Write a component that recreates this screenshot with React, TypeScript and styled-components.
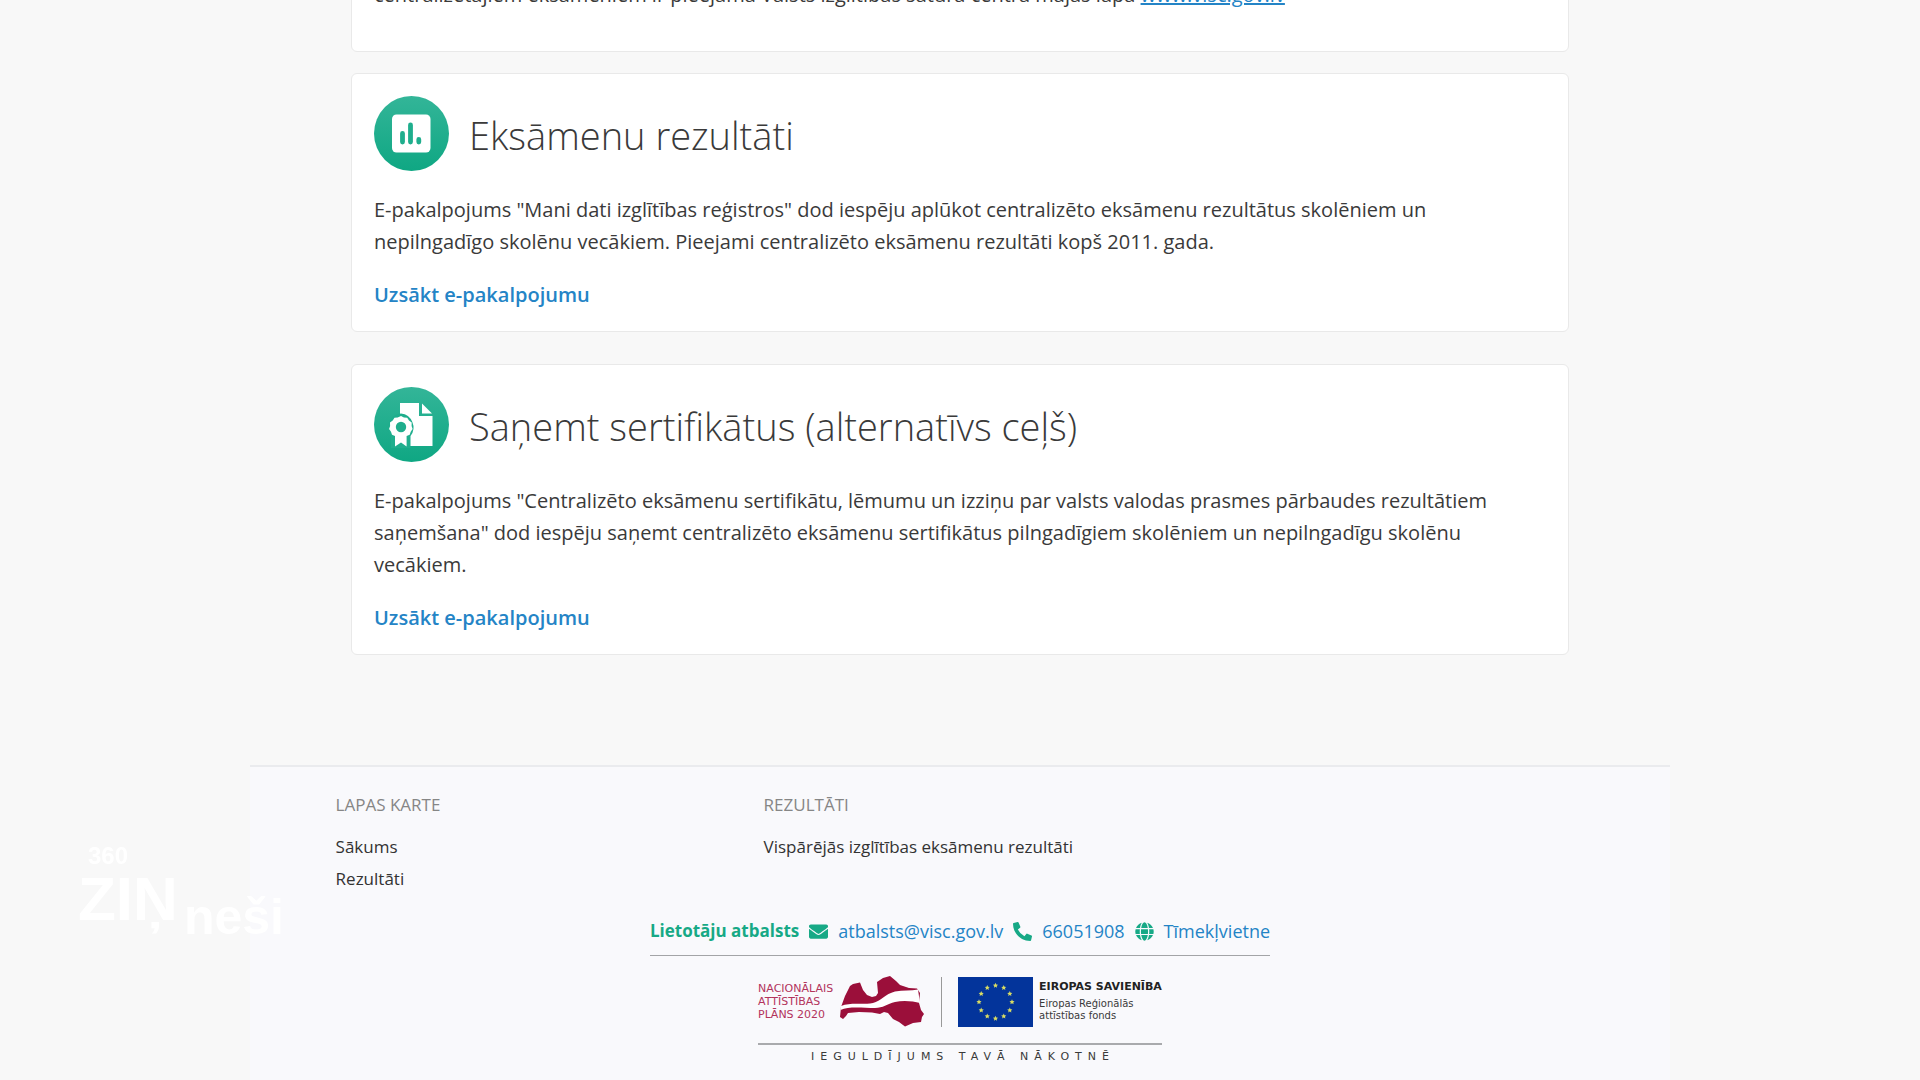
import React from "react";
import styled, { createGlobalStyle } from "styled-components";
import { FaEnvelope, FaPhoneAlt, FaGlobe } from "react-icons/fa";

const GlobalStyle = createGlobalStyle`
  *, *::before, *::after { box-sizing: border-box; }
  body {
    margin: 0;
    overflow: hidden;
    background: #f8f8f8;
    color: #3a3a3a;
    font-family: "Open Sans", "Noto Sans", sans-serif;
    font-size: 20px;
    line-height: 32px;
  }
  a { color: #2484c6; text-decoration: none; }
  h2, h3, p, ul { margin: 0; padding: 0; font-weight: 400; }
`;

const Page = styled.div`
  min-height: 100vh;
  overflow: hidden;
`;

const Main = styled.main`
  width: 64%;
  max-width: 1218px;
  margin: 0 auto;
  display: flex;
  flex-direction: column;
`;

const Card = styled.section<{ $gap: number }>`
  margin-bottom: ${(p) => p.$gap}px;
  padding: 22px 22px 20px;
  background: #fff;
  border: 1px solid #e9e9e9;
  border-radius: 6px;
`;

const ScrolledCard = styled(Card)`
  margin-top: -44px;
  padding-bottom: 40px;

  a { text-decoration: underline; }
`;

const CardHead = styled.header`
  display: flex;
  align-items: center;
  gap: 20px;
  margin-bottom: 23px;
`;

const Title = styled.h2`
  padding-top: 2px;
  font-size: 38px;
  line-height: 56px;
  font-weight: 300;
`;

const Badge = styled.svg`
  width: 75px;
  height: 75px;
  flex: none;
`;

const ServiceLink = styled.a`
  display: block;
  margin-top: 21px;
  font-weight: 600;
`;

const Footer = styled.footer`
  width: 74%;
  max-width: 1423px;
  min-height: 320px;
  margin: 78px auto 0;
  padding: 22px 86px 16px;
  display: flex;
  flex-direction: column;
  align-items: center;
  background: #f9f9fc;
  border-top: 2px solid #eaebee;
  font-size: 17px;
`;

const SiteMap = styled.nav`
  align-self: stretch;
  display: grid;
  grid-template-columns: 428px 1fr;
`;

const MapTitle = styled.h3`
  margin-bottom: 10px;
  color: #868686;
  font-size: 17px;
`;

const MapList = styled.ul`
  list-style: none;

  a { color: #333; }
`;

const Contacts = styled.div`
  margin-top: 20px;
  padding-bottom: 8px;
  display: flex;
  align-items: center;
  gap: 10px;
  border-bottom: 1px solid #a3a4a7;
  font-size: 18px;

  svg { color: #17a986; font-size: 19px; }
`;

const ContactLabel = styled.strong`
  color: #17a986;
  font-size: 17px;
  font-weight: 700;
`;

const Funding = styled.div`
  margin-top: 20px;
  font-family: "DejaVu Sans", Verdana, sans-serif;
`;

const Logos = styled.div`
  display: flex;
  align-items: center;
  padding-bottom: 16px;
  border-bottom: 2px solid #a9aaad;
`;

const PlanText = styled.p`
  width: 81px;
  color: #b3345c;
  font-size: 11px;
  line-height: 13px;
  white-space: nowrap;
`;

const Latvia = styled.svg`
  width: 86px;
  height: 51px;
`;

const Divider = styled.span`
  width: 1px;
  height: 50px;
  margin: 0 16px;
  background: #999;
`;

const Flag = styled.svg`
  width: 75px;
  height: 50px;
`;

const UnionText = styled.p`
  margin-left: 6px;
  font-size: 10px;
  line-height: 12px;

  strong { display: block; margin-bottom: 5px; color: #222; font-size: 11px; }
`;

const Tagline = styled.p`
  padding: 6px 0 0 6px;
  font-size: 11px;
  line-height: 12px;
  letter-spacing: 6px;
  text-align: center;
`;

const Watermark = styled.div`
  position: fixed;
  left: 78px;
  bottom: 138px;
  color: #fff;
  font-family: "Liberation Sans", Arial, sans-serif;
  font-weight: 700;
  pointer-events: none;
`;

const MarkTop = styled.div`
  padding-left: 10px;
  font-size: 24px;
  line-height: 24px;
`;

const MarkWord = styled.div`
  display: flex;
  align-items: flex-start;
  gap: 6px;
  font-size: 62px;
  line-height: 62px;

  span { padding-top: 24px; font-size: 50px; line-height: 50px; }
`;

function ChartBadge() {
  return (
    <Badge viewBox="0 0 75 75" aria-hidden="true">
      <defs>
        <linearGradient id="chartFill" x1="0" y1="0" x2="0" y2="1">
          <stop offset="0" stopColor="#33b598" />
          <stop offset="1" stopColor="#0fa783" />
        </linearGradient>
      </defs>
      <circle cx="37.5" cy="37.5" r="37.5" fill="url(#chartFill)" />
      <rect x="18" y="18.500" width="38.500" height="38" rx="4.500" fill="#fff" />
      <g stroke="#1fae8d" strokeWidth="4.800" strokeLinecap="round">
        <path d="M28.500 37.500v8.500M36.500 29v17M44.800 43.500v2.500" />
      </g>
    </Badge>
  );
}

function CertificateBadge() {
  return (
    <Badge viewBox="0 0 75 75" aria-hidden="true">
      <defs>
        <linearGradient id="certFill" x1="0" y1="0" x2="0" y2="1">
          <stop offset="0" stopColor="#33b598" />
          <stop offset="1" stopColor="#0fa783" />
        </linearGradient>
      </defs>
      <circle cx="37.5" cy="37.5" r="37.5" fill="url(#certFill)" />
      <path d="M26 16h19v13h13.500v30H26z" fill="#fff" />
      <path d="M48 16.500L58 26.500H48z" fill="#fff" />
      <path d="M27 26.500a14 14 0 0 1 9.500 22.500V61H17V49A14 14 0 0 1 27 26.500z" fill="#1fae8d" />
      <path
        d="M27 29l3 1.500 3.200.3 1.800 2.800 2.700 2-.1 3.300 1 3.100-1.900 2.700-1 3.100-3.100 1.100V59.500L27 55.500l-6 4V48.900l-3-1.100-1-3.100-1.900-2.700 1-3.100-.1-3.300 2.700-2 1.800-2.800 3.200-.3z"
        fill="#fff"
      />
      <circle cx="27" cy="40" r="5.200" fill="#1fae8d" />
    </Badge>
  );
}

const STARS = Array.from({ length: 12 }, (_, i) => {
  const a = (i * Math.PI) / 6;
  return { x: 37.5 + 16.5 * Math.sin(a), y: 25 - 16.5 * Math.cos(a) };
});

function starPoints(x: number, y: number) {
  return Array.from({ length: 10 }, (_, i) => {
    const r = i % 2 ? 1.3 : 2.7;
    const a = (i * Math.PI) / 5;
    return `${x + r * Math.sin(a)},${y - r * Math.cos(a)}`;
  }).join(" ");
}

export default function App() {
  return (
    <Page>
      <GlobalStyle />
      <Main>
        <ScrolledCard $gap={21}>
          <p>
            centralizētajiem eksāmeniem ir pieejama Valsts izglītības satura centra mājas lapā{" "}
            <a href="#visc">www.visc.gov.lv</a>
          </p>
        </ScrolledCard>
        <Card $gap={32}>
          <CardHead>
            <ChartBadge />
            <Title>Eksāmenu rezultāti</Title>
          </CardHead>
          <p>
            E-pakalpojums "Mani dati izglītības reģistros" dod iespēju aplūkot centralizēto eksāmenu
            rezultātus skolēniem un nepilngadīgo skolēnu vecākiem. Pieejami centralizēto eksāmenu
            rezultāti kopš 2011. gada.
          </p>
          <ServiceLink href="#rezultati">Uzsākt e-pakalpojumu</ServiceLink>
        </Card>
        <Card $gap={32}>
          <CardHead>
            <CertificateBadge />
            <Title>Saņemt sertifikātus (alternatīvs ceļš)</Title>
          </CardHead>
          <p>
            E-pakalpojums "Centralizēto eksāmenu sertifikātu, lēmumu un izziņu par valsts valodas
            prasmes pārbaudes rezultātiem saņemšana" dod iespēju saņemt centralizēto eksāmenu
            sertifikātus pilngadīgiem skolēniem un nepilngadīgu skolēnu vecākiem.
          </p>
          <ServiceLink href="#sertifikati">Uzsākt e-pakalpojumu</ServiceLink>
        </Card>
      </Main>
      <Footer>
        <SiteMap>
          <div>
            <MapTitle>LAPAS KARTE</MapTitle>
            <MapList>
              <li><a href="#sakums">Sākums</a></li>
              <li><a href="#rezultati">Rezultāti</a></li>
            </MapList>
          </div>
          <div>
            <MapTitle>REZULTĀTI</MapTitle>
            <MapList>
              <li><a href="#visparejas">Vispārējās izglītības eksāmenu rezultāti</a></li>
            </MapList>
          </div>
        </SiteMap>
        <Contacts>
          <ContactLabel>Lietotāju atbalsts</ContactLabel>
          <FaEnvelope />
          <a href="mailto:atbalsts@visc.gov.lv">atbalsts@visc.gov.lv</a>
          <FaPhoneAlt />
          <a href="tel:66051908">66051908</a>
          <FaGlobe />
          <a href="#timeklvietne">Tīmekļvietne</a>
        </Contacts>
        <Funding>
          <Logos>
            <PlanText>NACIONĀLAIS<br />ATTĪSTĪBAS<br />PLĀNS 2020</PlanText>
            <Latvia viewBox="0 0 86 51" aria-hidden="true">
              <path
                d="M1 41L2 31 6 20 11 10 14 8 21 6.500 24 14 28 19 33 21 37 20 39 17 38 6 44 2 51 0 57 5 61 9 70 12 78 12.500 81 17 80 27 82 34 85 38 83 41 82 46 74 47 66 50.500 60 46 54 43 49 37 45 36 41 38 33 36.500 20 36 9 37 7 40 4 43z"
                fill="#9b0f3a"
              />
              <path d="M2 30C12 26 22 29 34 27 42 25 46 18 56 15.500 64 14 72 15 79 13.500L81 27C74 25 64 24 56 26 48 28 44 32 36 32 24 32 10 30 1.500 34z" fill="#fff" />
            </Latvia>
            <Divider />
            <Flag viewBox="0 0 75 50" aria-hidden="true">
              <rect width="75" height="50" fill="#03349b" />
              {STARS.map((s, i) => (
                <polygon key={i} points={starPoints(s.x, s.y)} fill="#d9dc63" />
              ))}
            </Flag>
            <UnionText>
              <strong>EIROPAS SAVIENĪBA</strong>
              Eiropas Reģionālās<br />attīstības fonds
            </UnionText>
          </Logos>
          <Tagline>IEGULDĪJUMS TAVĀ NĀKOTNĒ</Tagline>
        </Funding>
      </Footer>
      <Watermark>
        <MarkTop>360</MarkTop>
        <MarkWord>ZIŅ<span>neši</span></MarkWord>
      </Watermark>
    </Page>
  );
}
